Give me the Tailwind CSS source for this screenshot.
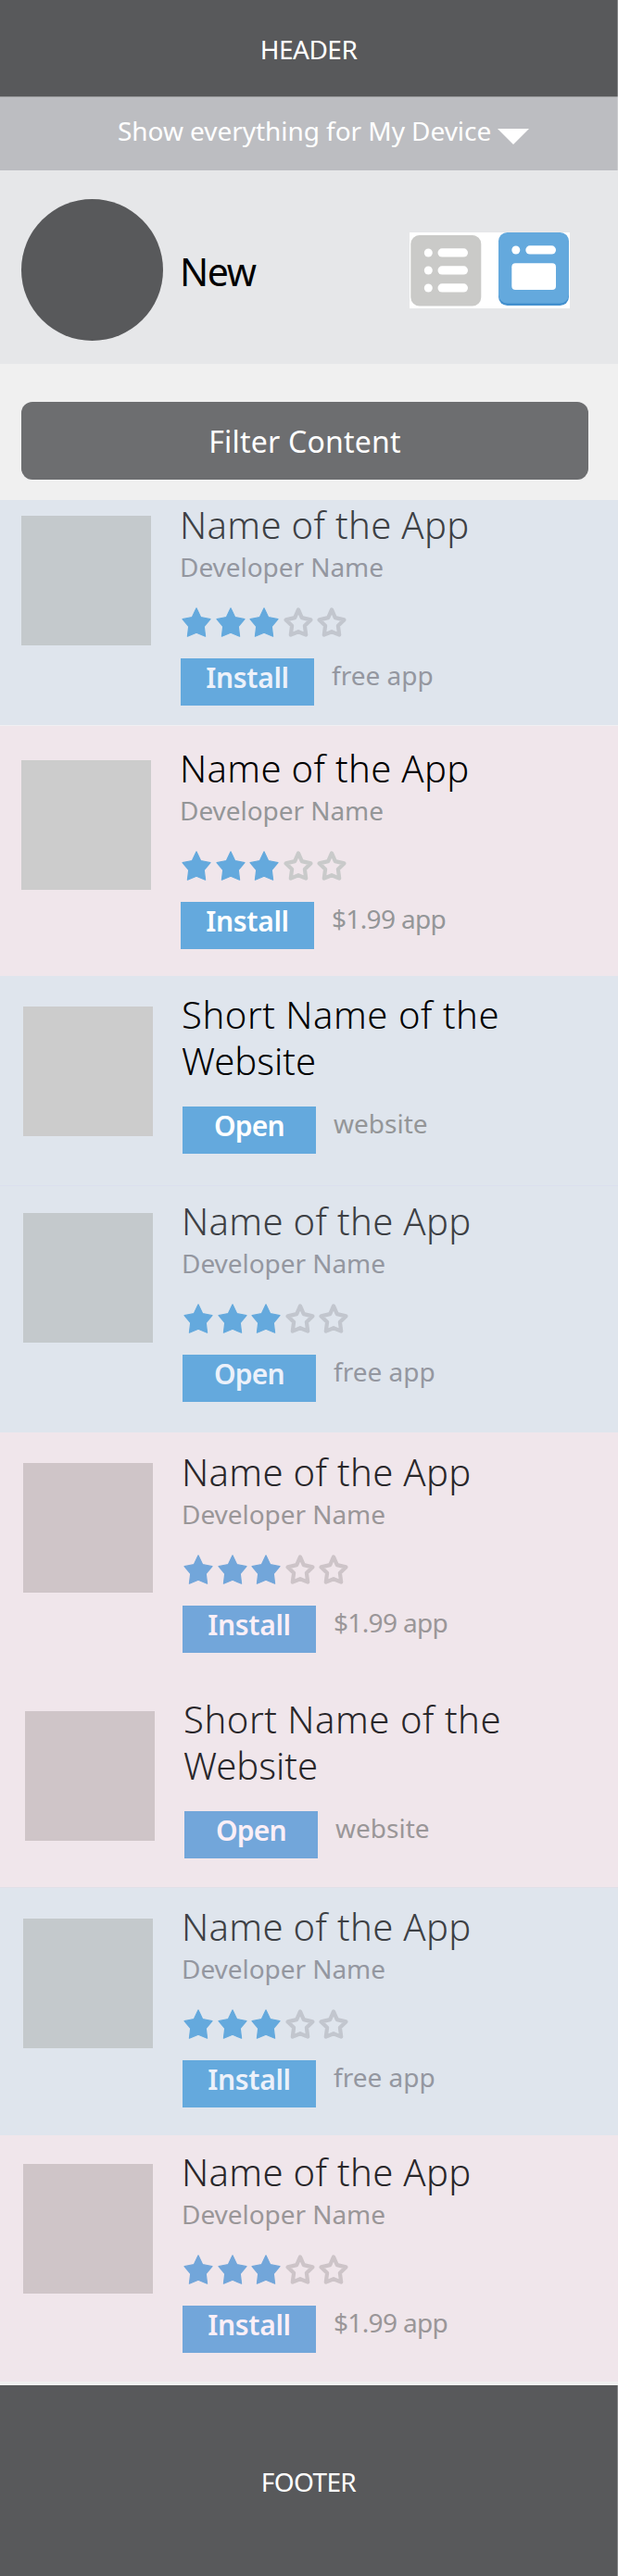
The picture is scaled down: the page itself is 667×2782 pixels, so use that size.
<!DOCTYPE html>
<html lang="en">
<head>
<meta charset="utf-8">
<title>New apps</title>
<script src="https://cdn.jsdelivr.net/npm/@tailwindcss/browser@4"></script>
</head>
<body class="w-[667px] bg-[#f0f0f0] font-['Noto_Sans',sans-serif] text-[28px] text-white">
<svg class="hidden">
  <symbol id="star" viewBox="0 0 32 32"><path d="M16 .8 20.6 10.5 31 12.7 24.3 20.6 25.6 31.2 16 27.3 6.4 31.2 7.7 20.6 1 12.7 11.4 10.5Z" fill="currentColor" stroke="currentColor" stroke-width="1.2" stroke-linejoin="round"/></symbol>
  <symbol id="star-empty" viewBox="0 0 32 32"><path d="M16 2.4 19.8 11.1 29.4 13.4 22.9 19.8 24.2 29.6 16 26.2 7.8 29.6 9.1 19.8 2.6 13.4 12.2 11.1Z" fill="none" stroke="currentColor" stroke-width="4.2" stroke-linejoin="round"/></symbol>
</svg>

<header class="flex h-[104px] items-start justify-center border-r border-[#858688] bg-[#58595b] pt-[33px] leading-10 tracking-[-.5px]">HEADER</header>

<nav class="flex h-20 items-start border-t border-r border-t-[#98999b] border-r-[#cccdd0] bg-[#bcbdc1] pl-[127px] pt-[12px] leading-[48px]">
  <span class="w-[410px] whitespace-nowrap tracking-[-.05px]">Show everything for My Device</span>
  <svg class="mt-[22px] h-[17px] w-[34px]" viewBox="0 0 34 17"><path d="M0 0H34L17 17Z" fill="#fff"/></svg>
</nav>

<section class="flex h-[209px] items-start bg-[#e6e7e9] pl-[23px] pt-[31px]">
  <div class="size-[153px] rounded-full bg-[#58595b]"></div>
  <h1 class="ml-[18px] mt-[50px] w-[248px] text-[41px] leading-[56px] tracking-[-1.4px] text-black">New</h1>
  <svg class="mt-9 h-[82px] w-[173px]" viewBox="0 0 173 82">
    <path d="M0 0H173V82H0Z" fill="#fff"/>
    <rect x="1.3" y="3" width="76" height="76.5" rx="9.5" fill="#cacac8"/>
    <g fill="#fff">
      <circle cx="20.3" cy="22" r="4.5"/><rect x="30.5" y="17.3" width="32.5" height="9.2" rx="4.6"/>
      <circle cx="20.3" cy="41" r="4.5"/><rect x="30.5" y="36.3" width="32.5" height="9.2" rx="4.6"/>
      <circle cx="20.3" cy="60" r="4.5"/><rect x="30.5" y="55.3" width="32.5" height="9.2" rx="4.6"/>
    </g>
    <rect x="96" y="3" width="76" height="76" rx="9.5" fill="#4390ce"/>
    <rect x="96" y="0" width="76" height="76.5" rx="9.5" fill="#64a9dd"/>
    <g fill="#fff">
      <circle cx="114.8" cy="19" r="4.5"/><rect x="125.3" y="14.3" width="32.7" height="9.2" rx="4.6"/>
      <rect x="110.3" y="33.3" width="47.7" height="28.7" rx="4"/>
    </g>
  </svg>
</section>

<section class="h-[147px] px-[23px] pt-[41px]">
  <button class="flex h-[84px] w-[612px] items-start justify-center rounded-xl bg-[#6d6e70] pt-[19px] text-[32px] leading-[48px] tracking-[.2px]">Filter Content</button>
</section>

<main id="list"></main>

<footer class="mt-1 flex h-[206px] items-start justify-center border-r border-[#858688] bg-[#58595b] pt-[84px] leading-10 tracking-[-.6px]">FOOTER</footer>

<script>
const tones = {
  blue:  {bg:'bg-[#dfe5ed]', thumb:'bg-[#c4c9cc]', title:'text-[#3d4044]', sub:'text-[#9497a0]', btn:'bg-[#64a9dd]', label:'text-[#ecf1fa]', full:'text-[#64a9dd]', empty:'text-[#c2c6ce]'},
  pinkA: {bg:'bg-[#f0e6eb]', thumb:'bg-[#cccccc]', title:'text-black', sub:'text-[#949698]', btn:'bg-[#64a9dd]', label:'text-white', full:'text-[#64a9dd]', empty:'text-[#c9caca]'},
  blueA: {bg:'bg-[#dfe5ed]', thumb:'bg-[#cccccc]', title:'text-black', sub:'text-[#949698]', btn:'bg-[#64a9dd]', label:'text-white', full:'', empty:''},
  pink:  {bg:'bg-[#f0e6eb]', thumb:'bg-[#cfc5c8]', title:'text-[#29272a]', sub:'text-[#9a9698]', btn:'bg-[#72a6da]', label:'text-[#fbeff7]', full:'text-[#72a6da]', empty:'text-[#cdc4c8]'},
};
// tone, row box, thumbnail top offset, left edge, button label, price line
const rows = [
  ['blue',  'h-[243px] pt-[2px]',  'mt-[15px]', 'pl-[23px]', 'Install', 'free app'],
  ['pinkA', 'h-[271px] pt-[21px] border-t border-[#f0f0f2]', 'mt-4', 'pl-[23px]', 'Install', '$1.99 app'],
  ['blueA', 'h-[226px] pt-[17px]', 'mt-4', 'pl-[25px]', 'Open', 'website'],
  ['blue',  'h-[267px] pt-[13px] border-t border-[#dbdfee]', 'mt-4', 'pl-[25px]', 'Open', 'free app'],
  ['pink',  'h-[265px] pt-[18px]', 'mt-[15px]', 'pl-[25px]', 'Install', '$1.99 app'],
  ['pink',  'h-[226px] pt-[20px]', 'mt-4', 'pl-[27px]', 'Open', 'website'],
  ['blue',  'h-[268px] pt-[17px] border-t border-[#e0dfe8]', 'mt-4', 'pl-[25px]', 'Install', 'free app'],
  ['pink',  'h-[266px] pt-[15px]', 'mt-4', 'pl-[25px]', 'Install', '$1.99 app'],
];
const use = (id, c) => `<svg class="size-8 ${c}"><use href="#${id}"/></svg>`;
document.getElementById('list').innerHTML = rows.map(([k, box, thumb, left, label, price]) => {
  const t = tones[k], site = price === 'website';
  const priceTrack = price[0] === '$' ? 'tracking-[-.65px]' : 'tracking-normal';
  return `<article class="flex items-start ${box} ${left} ${t.bg}">
    <div class="h-[140px] w-[140px] shrink-0 ${thumb} ${t.thumb}"></div>
    <div class="ml-8">
      ${site
        ? `<h2 class="-ml-px text-[40px] font-light leading-[50px] ${t.title}"><span class="tracking-[.55px]">Short Name of the</span><br>Website</h2>`
        : `<h2 class="-ml-px text-[40px] font-light leading-[50px] tracking-[.35px] ${t.title}">Name of the App</h2>
      <p class="-ml-px mt-1 leading-8 tracking-[-.05px] ${t.sub}">Developer Name</p>
      <div class="ml-px mt-7 flex gap-[4.5px]">${use('star', t.full).repeat(3)}${use('star-empty', t.empty).repeat(2)}</div>`}
      <div class="${site ? 'mt-6' : 'mt-[23px]'} flex items-start">
        <button class="flex h-[51px] w-36 items-start justify-center text-[30px] font-semibold leading-[42px] ${label === 'Open' ? 'tracking-[-.8px]' : 'tracking-[-.3px]'} ${t.btn} ${t.label}">${label}</button>
        <span class="ml-[19px] leading-[37px] ${priceTrack} ${t.sub}">${price}</span>
      </div>
    </div>
  </article>`;
}).join('');
</script>
</body>
</html>
